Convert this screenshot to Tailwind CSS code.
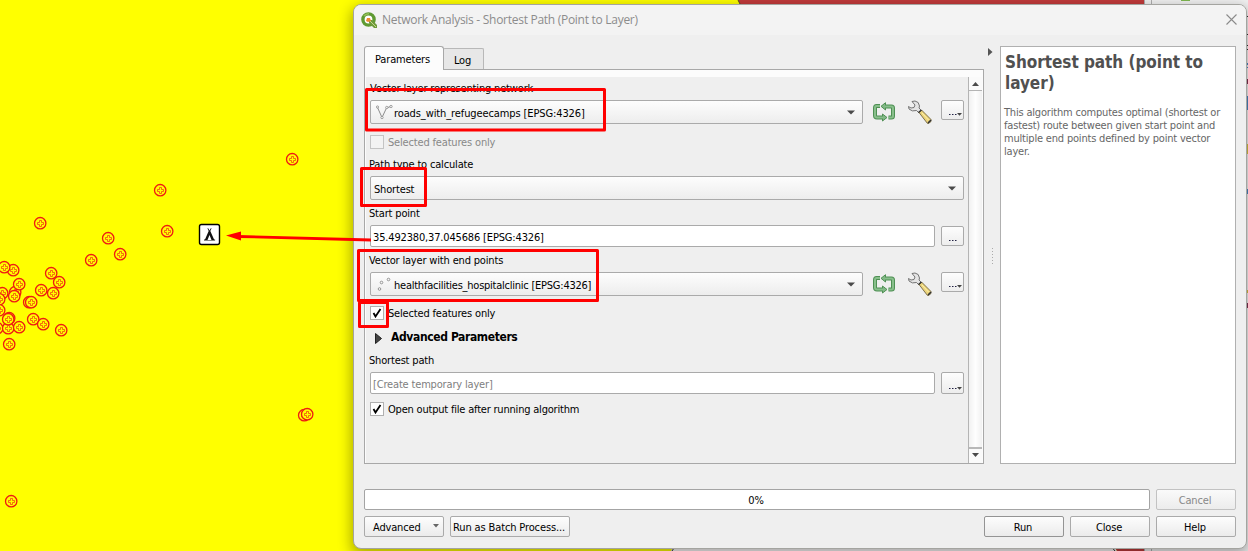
<!DOCTYPE html>
<html lang="en">
<head>
<meta charset="utf-8">
<title>Network Analysis</title>
<script src="https://cdn.jsdelivr.net/npm/@tailwindcss/browser@4"></script>
</head>
<body class="relative h-[551px] w-[1248px] overflow-hidden bg-[#ffff00] font-['DejaVu_Sans_Condensed','DejaVu_Sans',sans-serif] text-[11px] leading-[14px] tracking-[-0.17px] text-black">

<!-- map canvas -->
<svg class="absolute inset-0" width="1248" height="551" viewBox="0 0 1248 551">
  <defs>
    <g id="h" fill="none" stroke="#ee1c12">
      <circle cx=".2" cy=".2" r="5.700" fill="#ffff00" stroke-width="1.300"/>
      <path d="M-.5-2.500H1.500V-.5H3.500V1.500H1.500V3.500H-.5V1.500H-2.500V-.5H-.5Z" stroke="#f03c10" stroke-width=".75"/>
    </g>
  </defs>
  <path d="M738 0H1144V8H742Z" fill="#c13a3a"/><path d="M738 0l4 8" stroke="#552" fill="none"/>
  <rect x="1144" width="104" height="551" fill="#f2f2f2"/>
  <path d="M1144.500 0V551M1151.500 0V551" stroke="#b0b0b0"/>
  <path d="M1181 0h9" stroke="#7fb850" stroke-width="2"/>
  <path d="M676 540H1110L1117 551H671Z" fill="#fbf8f8"/>
  <path d="M1110 540H1144V551H1117Z" fill="#c13a3a"/>
  <path d="M676 545L672 551M1110 545L1115 551" stroke="#333"/>
  <g stroke-width="2">
    <path d="M1247 16v1M1247 34v1M1247 45v1M1247 49v1" stroke="#333"/>
    <path d="M1247 63v2M1247 67v1M1247 96v14M1247 189v5" stroke="#4c86c0"/>
    <path d="M1247 79v5M1247 303v5" stroke="#803050"/>
    <path d="M1247 144v10M1247 290v3" stroke="#d8c040"/>
  </g>
  <use href="#h" x="292" y="159"/><use href="#h" x="160" y="190"/><use href="#h" x="40" y="223"/>
  <use href="#h" x="167" y="231"/><use href="#h" x="108" y="238"/><use href="#h" x="120" y="254"/>
  <use href="#h" x="91" y="260"/><use href="#h" x="13" y="270"/><use href="#h" x="4" y="267"/>
  <use href="#h" x="51" y="273"/><use href="#h" x="59" y="282"/><use href="#h" x="53" y="293"/><use href="#h" x="41" y="290"/>
  <use href="#h" x="15" y="292"/><use href="#h" x="19" y="284"/><use href="#h" x="14" y="296"/>
  <use href="#h" x="2" y="293"/><use href="#h" x="-1" y="299"/><use href="#h" x="29" y="302"/><use href="#h" x="31" y="302"/>
  <use href="#h" x="-1" y="310"/><use href="#h" x="-3" y="328"/><use href="#h" x="8" y="328"/><use href="#h" x="19" y="327"/>
  <use href="#h" x="9" y="318"/><use href="#h" x="8" y="319"/><use href="#h" x="33" y="319"/><use href="#h" x="43" y="324"/>
  <use href="#h" x="61" y="330"/><use href="#h" x="9" y="344"/>
  <use href="#h" x="304" y="415"/><use href="#h" x="307" y="414"/><use href="#h" x="11" y="501"/>
  <rect x="199.500" y="224.500" width="20" height="20" rx="2" fill="#fff" stroke="#000" stroke-width="1.400"/>
  <path d="M208 228l1.500 2.500 1.500-2.500.5.5-1.200 2.500 3.800 8.500h1v1H204v-1h1l3.700-8.500-1.200-2.500ZM209.500 235l-2 5h4Z" fill="#111" fill-rule="evenodd"/>
</svg>

<!-- dialog window -->
<main class="absolute left-[353px] top-[4px] flex h-[545px] w-[894px] flex-col rounded-[8px] border border-[#a4a4a0] bg-[#efefef] [box-shadow:0_5px_14px_2px_rgba(0,0,0,0.32)]">
  <header class="flex h-[30px] shrink-0 items-center rounded-t-[7px] bg-[#f3f3f3] pl-[7px] pr-[9px]">
    <svg width="16" height="16" viewBox="0 0 16 16"><circle cx="7.500" cy="7.500" r="5.600" fill="#fff" stroke="#5f9a32" stroke-width="3.400"/><path d="M3 4a6 6 0 0 1 5-2.300" stroke="#97c158" stroke-width="1.400" fill="none"/><path d="M8 8h3l5 5v3h-3L8 11Z" fill="#6f9a3a"/><path d="M9 9l6 6" stroke="#c2d890"/><path d="M6 6h3l1 3-3 1-2-1Z" fill="#ee8a30"/></svg>
    <h1 class="ml-[5px] font-['Open_Sans',sans-serif] text-[12px] tracking-[-0.28px] text-[#8c8c8c]">Network Analysis - Shortest Path (Point to Layer)</h1>
    <svg class="-mt-[2px] ml-auto" width="11" height="11" viewBox="0 0 11 11"><path d="M.5.500l10 10M10.500.500l-10 10" stroke="#8a8a8a" stroke-width="1.100"/></svg>
  </header>

  <div class="flex h-[429px] shrink-0 pl-[10px] pt-[11px]">
    <div class="w-[620px]">
      <nav class="flex h-[23px] items-end">
        <div class="relative z-10 -mb-px flex h-[24px] w-[80px] items-center justify-center rounded-t-[3px] border border-b-0 border-[#a8a8a8] bg-[#fcfcfc] pb-px pr-[3px] pt-[3px]">Parameters</div>
        <div class="-ml-px flex h-[21px] w-[41px] items-center justify-center rounded-t-[2px] border border-b-0 border-[#b8b8b8] bg-[#e7e7e7] pr-[2px] pt-[3px]">Log</div>
      </nav>
      <section class="flex h-[395px] border border-[#a8a8a8] bg-[#fcfcfc] pl-px pr-px pt-[7px]">
        <div class="w-[602px] shrink-0 bg-[#efefef] pl-[4px]">
          <div class="-ml-px -mt-px flex h-[24px] items-center pl-px pt-[2px]">Vector layer representing network</div>
          <div class="-mt-px flex h-[26px]">
            <div class="mt-px flex h-[24px] w-[493px] items-center rounded-[2px] border border-[#aaa] bg-linear-to-b from-[#fdfdfd] to-[#ededed] pl-[5px] pr-[7px] pt-[3px]">
              <svg class="-mt-[3px]" width="17" height="16" viewBox="0 0 17 16" fill="none" stroke="#808080"><path d="M1.500 3.500L6 13.500l4.500-9.500 4-1.500" stroke-width=".9"/><g fill="#f8f8f8" stroke-width=".7"><circle cx="1.500" cy="3" r="1.100"/><circle cx="6" cy="13.500" r="1.200"/><circle cx="10.800" cy="3.500" r="1.200"/><circle cx="15" cy="2.500" r="1.200"/></g></svg>
              <span class="ml-px tracking-[-0.11px]">roads_with_refugeecamps [EPSG:4326]</span>
              <svg class="-mt-[3px] ml-auto" width="8" height="5" viewBox="0 0 8 5"><path d="M0 .500h8L4 4.500Z" fill="#4a4a4a"/></svg>
            </div>
            <svg class="ml-[10px] mt-[3px]" width="22" height="20" viewBox="0 0 22 20"><g id="cyc" fill="none" stroke-linejoin="round"><path d="M7 4H3.500Q2 4 2 6V13.500Q2 15.500 4 15.500H10M12 4.500H18.500Q20 4.500 20 6V14Q20 15.500 18.500 15.500H15.500" stroke="#4f9054" stroke-width="4"/><path d="M8 4.300L12.500.700V8ZM14 15.500L9.500 12V19Z" fill="#82b886" stroke="#4f9054"/><path d="M7 4H3.500Q2 4 2 6V13.500Q2 15.500 4 15.500H10M12 4.500H18.500Q20 4.500 20 6V14Q20 15.500 18.500 15.500H15.500" stroke="#88bf8b" stroke-width="2"/></g></svg>
            <svg class="ml-[12px] mt-[1px]" width="26" height="24" viewBox="0 0 26 24"><g id="wr"><path d="M5 1.500L8 1Q12 1.500 12.500 6L12 8 14.500 10.500 12 13 9.500 10.500Q5 12 2 9L1.500 6.500 4 8 7 7.500 8 5Z" fill="#e4e4e4" stroke="#666" stroke-width=".9"/><path d="M12 12.500L14.500 10 24 19.500V21.500L21.500 23.500H20.500Z" fill="#ecd47c" stroke="#716440" stroke-width=".9"/><path d="M11.500 12.500L14.500 10M21 23l3-3" stroke="#333" stroke-width="1.500"/><path d="M15 13l6.500 7" stroke="#fff2aa"/></g></svg>
            <button class="ml-auto mr-[4px] mt-px flex h-[20px] w-[23px] items-end rounded-[2px] border border-[#aaa] bg-linear-to-b from-[#fdfdfd] to-[#ededed] pb-[3px] pl-[7px]"><svg width="14" height="4" viewBox="0 0 14 4"><path d="M0 2.500h1.500M3 2.500h1.500M6 2.500h1.500" stroke="#224"/><path d="M8 1h5l-2.500 2.800Z" fill="#444"/></svg></button>
          </div>
          <div class="flex h-[33px] items-center gap-[4px] text-[#888]"><span class="h-[14px] w-[14px] border border-[#c4c4c4] bg-[#f3f3f3]"></span><span class="pt-[2px]">Selected features only</span></div>
          <div class="-ml-px -mt-[4px] flex h-[22px] items-center">Path type to calculate</div>
          <div class="flex h-[24px] w-[594px] items-center rounded-[2px] border border-[#aaa] bg-linear-to-b from-[#fdfdfd] to-[#ededed] pl-[3px] pr-[7px] pt-[3px]">Shortest<svg class="-mt-[3px] ml-auto" width="8" height="5" viewBox="0 0 8 5"><path d="M0 .500h8L4 4.500Z" fill="#4a4a4a"/></svg></div>
          <div class="-ml-px flex h-[25px] items-center pt-[3px]">Start point</div>
          <div class="flex h-[22px]">
            <div class="flex h-[22px] w-[565px] items-center rounded-[2px] border border-[#aaa] bg-white pl-[2px] pt-[3px] tracking-[-0.16px]">35.492380,37.045686 [EPSG:4326]</div>
            <button class="ml-auto mr-[4px] mt-px flex h-[20px] w-[23px] items-end rounded-[2px] border border-[#aaa] bg-linear-to-b from-[#fdfdfd] to-[#ededed] pb-[3px] pl-[7px]"><svg width="14" height="4" viewBox="0 0 14 4"><path d="M0 2.500h1.500M3 2.500h1.500M6 2.500h1.500" stroke="#224"/></svg></button>
          </div>
          <div class="-ml-px flex h-[25px] items-center pt-[3px]">Vector layer with end points</div>
          <div class="flex h-[24px]">
            <div class="flex h-[24px] w-[493px] items-center rounded-[2px] border border-[#aaa] bg-linear-to-b from-[#fdfdfd] to-[#ededed] pl-[5px] pr-[7px] pt-[3px]">
              <svg class="-mt-[3px]" width="17" height="16" viewBox="0 0 17 16" fill="#f8f8f8" stroke="#808080" stroke-width=".8"><circle cx="3.500" cy="13" r="1.300"/><circle cx="5.500" cy="6.500" r="1.300"/><circle cx="12.500" cy="3.500" r="1.300"/></svg>
              <span class="ml-px tracking-[-0.24px]">healthfacilities_hospitalclinic [EPSG:4326]</span>
              <svg class="-mt-[3px] ml-auto" width="8" height="5" viewBox="0 0 8 5"><path d="M0 .500h8L4 4.500Z" fill="#4a4a4a"/></svg>
            </div>
            <svg class="ml-[10px] mt-[2px]" width="22" height="20" viewBox="0 0 22 20"><use href="#cyc"/></svg>
            <svg class="ml-[12px]" width="26" height="24" viewBox="0 0 26 24"><use href="#wr"/></svg>
            <button class="ml-auto mr-[4px] flex h-[20px] w-[23px] items-end rounded-[2px] border border-[#aaa] bg-linear-to-b from-[#fdfdfd] to-[#ededed] pb-[3px] pl-[7px]"><svg width="14" height="4" viewBox="0 0 14 4"><path d="M0 2.500h1.500M3 2.500h1.500M6 2.500h1.500" stroke="#224"/><path d="M8 1h5l-2.500 2.800Z" fill="#444"/></svg></button>
          </div>
          <div class="flex h-[34px] items-center gap-[4px]"><span class="flex h-[14px] w-[14px] items-center justify-center border border-[#b0b0b0] bg-white"><svg width="10" height="10" viewBox="0 0 10 10"><path d="M1.500 5l2 3.500L8.500 1" fill="none" stroke="#000" stroke-width="1.800"/></svg></span><span class="pt-[2px]">Selected features only</span></div>
          <div class="flex h-[14px] items-center pl-[5px] text-[12px] font-bold tracking-[-0.38px]"><svg class="mr-[9px] mt-[2px]" width="7" height="11" viewBox="0 0 7 11"><path d="M.5.500L6.500 5.500.500 10.500Z" fill="#444" stroke="#222"/></svg>Advanced Parameters</div>
          <div class="-ml-px flex h-[28px] items-center pt-[6px]">Shortest path</div>
          <div class="flex h-[22px]">
            <div class="flex h-[22px] w-[565px] items-center rounded-[2px] border border-[#aaa] bg-white pl-[2px] pt-[3px] text-[#808080]">[Create temporary layer]</div>
            <button class="ml-auto mr-[4px] flex h-[22px] w-[23px] items-end rounded-[2px] border border-[#aaa] bg-linear-to-b from-[#fdfdfd] to-[#ededed] pb-[3px] pl-[7px]"><svg width="14" height="4" viewBox="0 0 14 4"><path d="M0 2.500h1.500M3 2.500h1.500M6 2.500h1.500" stroke="#224"/><path d="M8 1h5l-2.500 2.800Z" fill="#444"/></svg></button>
          </div>
          <div class="flex h-[30px] items-center gap-[4px]"><span class="flex h-[14px] w-[14px] items-center justify-center border border-[#b0b0b0] bg-white"><svg width="10" height="10" viewBox="0 0 10 10"><path d="M1.500 5l2 3.500L8.500 1" fill="none" stroke="#000" stroke-width="1.800"/></svg></span><span class="pt-[2px] tracking-[-0.2px]">Open output file after running algorithm</span></div>
        </div>
        <div class="flex flex-1 flex-col border-l border-[#b4b4b4] bg-linear-to-r from-[#f1f1f1] via-[#fefefe] to-[#f1f1f1]">
          <div class="flex h-[14px] items-center justify-center border-b border-[#b4b4b4] bg-[#fafafa]"><svg width="7" height="4" viewBox="0 0 7 4"><path d="M0 4h7L3.500 0Z" fill="#4a4a4a"/></svg></div>
          <div class="mt-auto flex h-[16px] items-center justify-center border-t-2 border-[#b8b8b8] bg-[#fafafa] pb-[2px]"><svg width="7" height="4" viewBox="0 0 7 4"><path d="M0 0h7L3.500 4Z" fill="#4a4a4a"/></svg></div>
        </div>
      </section>
    </div>
    <div class="flex w-[16px] flex-col pl-[4px]">
      <svg class="mt-[2px]" width="5" height="8" viewBox="0 0 5 8"><path d="M0 0l4.500 4L0 8Z" fill="#555"/></svg>
      <svg class="ml-[4px] mt-[192px]" width="2" height="17" viewBox="0 0 2 17"><path d="M.5 0V17" stroke="#aaa" stroke-dasharray="1 2"/></svg>
    </div>
    <aside class="h-[418px] w-[236px] border border-[#b0b0b0] bg-white pl-[4px] pt-[5px] text-[#666]">
      <h2 class="text-[17px] font-bold leading-[21px] tracking-[-0.05px] text-[#505050]">Shortest path (point to<br>layer)</h2>
      <p class="-ml-px mt-[12px] whitespace-nowrap leading-[13px] tracking-[-0.19px]">This algorithm computes optimal (shortest or<br>fastest) route between given start point and<br>multiple end points defined by point vector<br>layer.</p>
    </aside>
  </div>

  <footer class="flex flex-col gap-[6px] pl-[10px] pr-[10px] pt-[25px]">
    <div class="flex h-[21px] gap-[6px]">
      <div class="flex w-[786px] items-center justify-center rounded-[2px] border border-[#a4a4a4] bg-white pr-[2px] pt-[2px]">0%</div>
      <button class="flex-1 rounded-[2px] border border-[#c2c2c2] bg-linear-to-b from-[#fafafa] to-[#ececec] pr-[2px] pt-[2px] text-[#888]">Cancel</button>
    </div>
    <div class="flex h-[21px] gap-[6px]">
      <button class="flex w-[80px] items-center rounded-[2px] border border-[#aaa] bg-linear-to-b from-[#fdfdfd] to-[#ebebeb] pl-[8px] pr-[4px] pt-[2px]">Advanced<svg class="-mt-[3px] ml-auto" width="6" height="4" viewBox="0 0 6 4"><path d="M0 0h6L3 3.500Z" fill="#666"/></svg></button>
      <button class="w-[120px] whitespace-nowrap rounded-[2px] border border-[#aaa] bg-linear-to-b from-[#fdfdfd] to-[#ebebeb] pr-[2px] pt-[2px] tracking-[-0.13px]">Run as Batch Process...</button>
      <button class="ml-auto w-[80px] rounded-[2px] border border-[#949494] bg-linear-to-b from-[#fdfdfd] to-[#ebebeb] pr-[2px] pt-[2px]">Run</button>
      <button class="w-[80px] rounded-[2px] border border-[#aaa] bg-linear-to-b from-[#fdfdfd] to-[#ebebeb] pr-[2px] pt-[2px]">Close</button>
      <button class="w-[80px] rounded-[2px] border border-[#aaa] bg-linear-to-b from-[#fdfdfd] to-[#ebebeb] pr-[2px] pt-[2px]">Help</button>
    </div>
  </footer>
</main>

<!-- red annotations -->
<svg class="absolute inset-0" width="1248" height="551" viewBox="0 0 1248 551" fill="none" stroke="#ff0000" stroke-width="3" stroke-linejoin="round">
  <rect x="366.500" y="89.500" width="238" height="40.500"/>
  <rect x="361.500" y="168.500" width="64" height="37"/>
  <rect x="358.500" y="250.500" width="239" height="50"/>
  <rect x="359.500" y="302.500" width="28" height="24"/>
  <path d="M371 240L238 236.500" stroke-width="2.800"/>
  <path d="M226 235.500L241 231.500V240.500Z" fill="#f00" stroke="none"/>
</svg>
</body>
</html>
